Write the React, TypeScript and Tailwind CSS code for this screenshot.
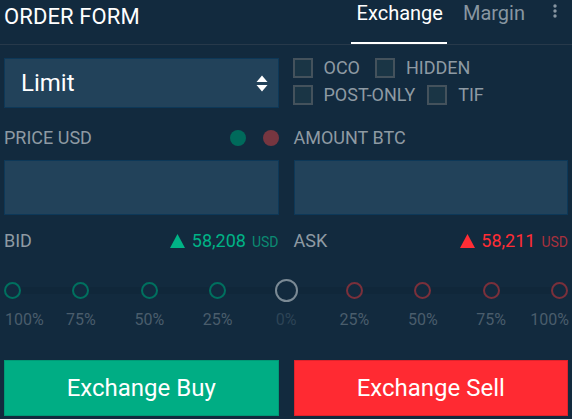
import React from 'react';

const steps = [
  { label: '100%', side: 'buy' },
  { label: '75%', side: 'buy' },
  { label: '50%', side: 'buy' },
  { label: '25%', side: 'buy' },
  { label: '0%', side: 'none' },
  { label: '25%', side: 'sell' },
  { label: '50%', side: 'sell' },
  { label: '75%', side: 'sell' },
  { label: '100%', side: 'sell' },
];

function Checkbox({ label }: { label: string }) {
  return (
    <label className="flex items-center gap-[11px]">
      <span className="w-[20px] h-[20px] border-2 border-[#44525c] bg-[#1a3545]" />
      <span className="text-[18px] leading-[20px] text-[#8e9aa3]">{label}</span>
    </label>
  );
}

function SortIcon() {
  return (
    <svg width="12" height="17" viewBox="0 0 12 17" fill="#ffffff">
      <path d="M6 0.5 L11.5 7 H0.5 Z" />
      <path d="M0.5 10 H11.5 L6 16.5 Z" />
    </svg>
  );
}

function Triangle({ color }: { color: string }) {
  return (
    <svg width="15" height="14" viewBox="0 0 15 14">
      <path d="M7.5 0 L15 14 H0 Z" fill={color} />
    </svg>
  );
}

export default function App() {
  return (
    <div className="w-[572px] h-[419px] bg-[#122a3e] font-['Roboto',sans-serif] overflow-hidden">
      {/* Header */}
      <div className="flex h-[45px] border-b border-[#27394a] pl-[4px]">
        <h1 className="mt-[6px] text-[22px] leading-[22px] text-white tracking-[0.1px]">ORDER FORM</h1>
        <div className="ml-auto flex h-[44px]">
          <div className="relative px-[4px] pt-[3px] mr-[1px]">
            <span className="text-[20px] leading-[20px] text-white">Exchange</span>
            <div className="absolute -left-[2px] right-0 bottom-0 h-[2px] bg-white" />
          </div>
          <div className="px-[5px] ml-[10px] pt-[3px]">
            <span className="text-[20px] leading-[20px] text-[#8896a1]">Margin</span>
          </div>
          <div className="ml-[23px] mr-[15px] pt-[4px]">
            <svg width="4" height="14" viewBox="0 0 4 14" fill="#8896a1">
              <circle cx="2" cy="2" r="1.7" />
              <circle cx="2" cy="7" r="1.7" />
              <circle cx="2" cy="12" r="1.7" />
            </svg>
          </div>
        </div>
      </div>

      <div className="grid grid-cols-2 gap-x-[15px] px-[4px]">
        {/* Order type + flags */}
        <div className="mt-[13px] h-[50px] flex items-center justify-between border border-[#0d3858] bg-[#22425a] pl-[16px] pr-[10px]">
          <span className="text-[24px] leading-[24px] text-white">Limit</span>
          <SortIcon />
        </div>
        <div className="mt-[13px] flex flex-col gap-[7px] -ml-[1px]">
          <div className="flex gap-[15px]">
            <Checkbox label="OCO" />
            <Checkbox label="HIDDEN" />
          </div>
          <div className="flex gap-[12px]">
            <Checkbox label="POST-ONLY" />
            <Checkbox label="TIF" />
          </div>
        </div>

        {/* Labels */}
        <div className="mt-[20px] h-[20px] flex items-center">
          <span className="text-[18px] leading-[20px] text-[#8e9aa3]">PRICE USD</span>
          <span className="ml-auto w-[16px] h-[16px] rounded-full bg-[#006a5b]" />
          <span className="ml-[17px] w-[16px] h-[16px] rounded-full bg-[#763640]" />
        </div>
        <div className="mt-[20px] h-[20px] flex items-center">
          <span className="text-[18px] leading-[20px] text-[#8e9aa3]">AMOUNT BTC</span>
        </div>

        {/* Inputs */}
        <input className="mt-[12px] h-[55px] w-full border border-[#0d3858] bg-[#22425a] outline-none" />
        <input className="mt-[12px] h-[55px] w-full border border-[#0d3858] bg-[#22425a] outline-none" />

        {/* Bid / Ask */}
        <div className="mt-[16px] h-[20px] flex items-center">
          <span className="text-[18px] leading-[20px] text-[#8e9aa3]">BID</span>
          <div className="ml-auto flex items-center">
            <Triangle color="#00b386" />
            <span className="ml-[7px] text-[18px] leading-[20px] text-[#00b386]">58,208</span>
            <span className="ml-[6px] mt-[2px] text-[14px] leading-[20px] text-[#0b8a72]">USD</span>
          </div>
        </div>
        <div className="mt-[16px] h-[20px] flex items-center">
          <span className="text-[18px] leading-[20px] text-[#8e9aa3]">ASK</span>
          <div className="ml-auto flex items-center">
            <Triangle color="#ff2d35" />
            <span className="ml-[6px] text-[18px] leading-[20px] text-[#ff2d35]">58,211</span>
            <span className="ml-[6px] mt-[2px] text-[14px] leading-[20px] text-[#a8313d]">USD</span>
          </div>
        </div>
      </div>

      {/* Slider */}
      <div className="relative mt-[28px] mx-[1px]">
        <div className="absolute left-[12px] right-[12px] top-[8px] h-[7px] bg-[#10273a]" />
        <div className="relative flex justify-between">
          {steps.map((s, i) => (
            <div key={i} className="w-[23px] flex flex-col items-center">
              <div className="h-[23px] flex items-center justify-center">
                {s.side === 'none' ? (
                  <span className="w-[23px] h-[23px] rounded-full border-2 border-[#7b8a95] bg-[#122a3e]" />
                ) : (
                  <span
                    className={
                      s.side === 'buy'
                        ? 'w-[17px] h-[17px] rounded-full border-2 border-[#00705f] bg-[#122a3e]'
                        : 'w-[17px] h-[17px] rounded-full border-2 border-[#7a303b] bg-[#122a3e]'
                    }
                  />
                )}
              </div>
              <span
                className={
                  'mt-[8px] text-[16px] leading-[20px] whitespace-nowrap ' +
                  (s.side === 'none' ? 'text-[#2d4456] ' : 'text-[#4a5d6c] ') +
                  (i === 0 ? 'self-start ml-[4px]' : i === steps.length - 1 ? 'self-end mr-[2px]' : '')
                }
              >
                {s.label}
              </span>
            </div>
          ))}
        </div>
      </div>

      {/* Buttons */}
      <div className="mt-[30px] grid grid-cols-2 gap-x-[15px] px-[4px]">
        <button className="h-[56px] bg-[#00ad84] border border-[#009a76] text-white text-[24px] leading-[24px]">
          Exchange Buy
        </button>
        <button className="h-[56px] bg-[#ff2a32] border border-[#e0222b] text-white text-[24px] leading-[24px]">
          Exchange Sell
        </button>
      </div>
    </div>
  );
}
